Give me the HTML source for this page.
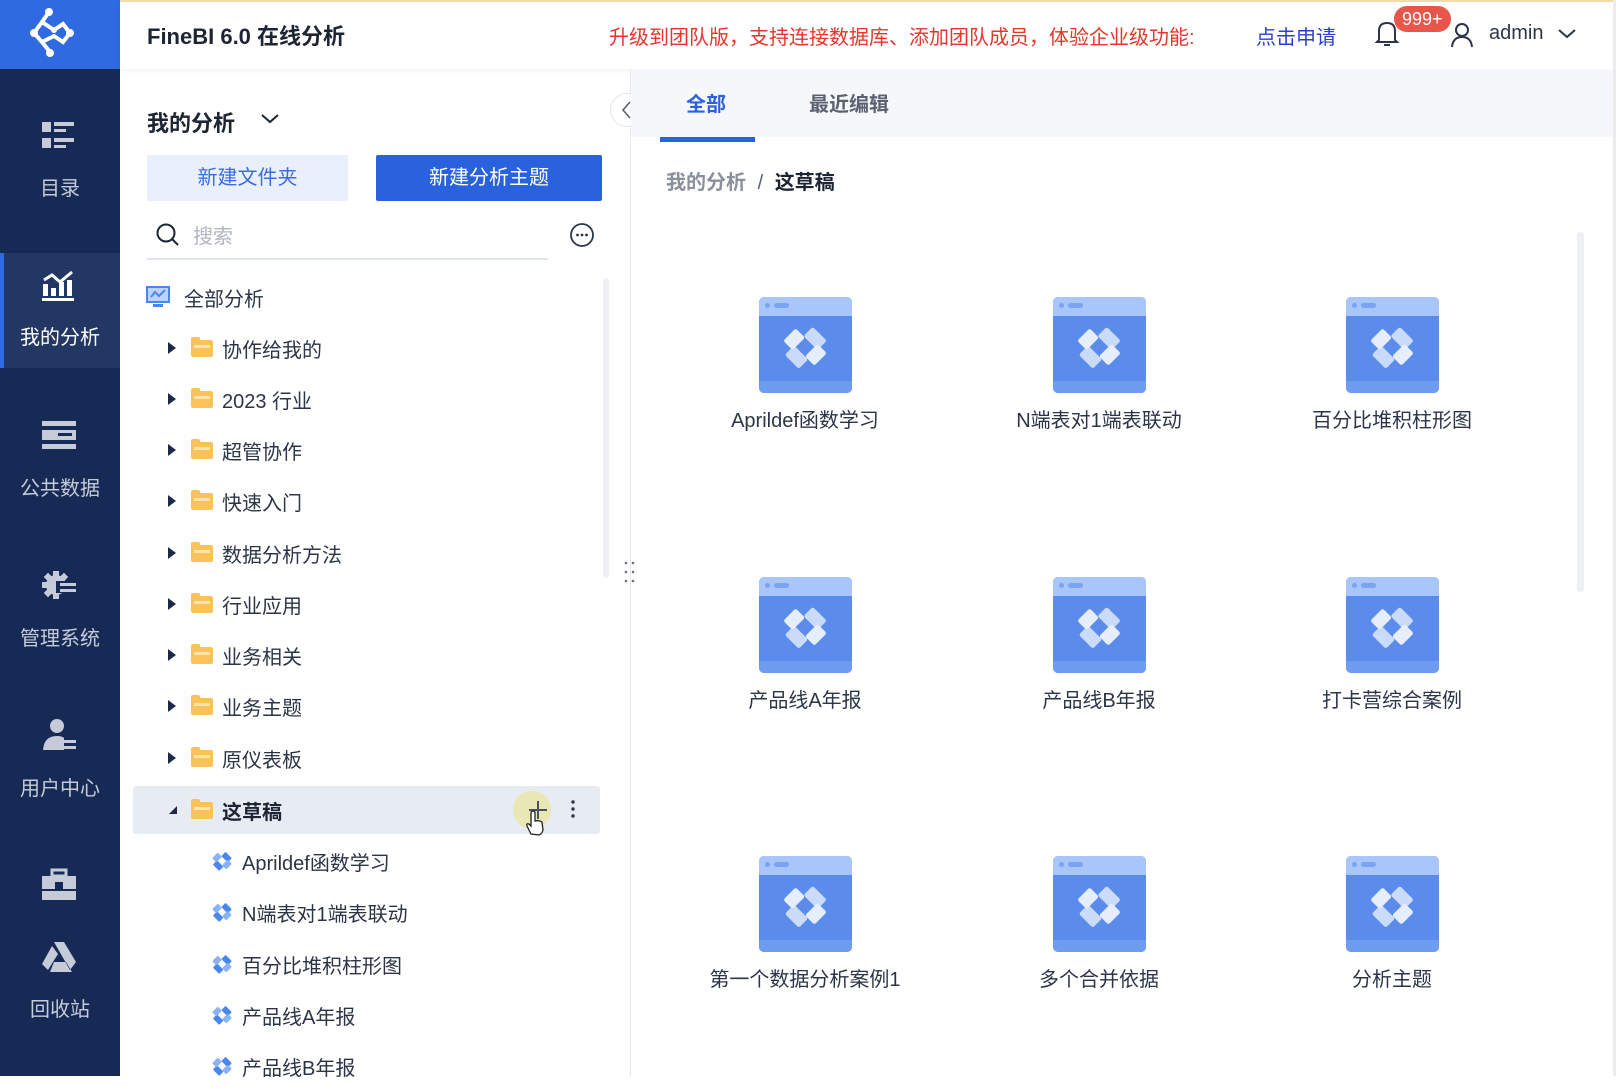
<!DOCTYPE html>
<html><head><meta charset="utf-8">
<style>
*{margin:0;padding:0;box-sizing:border-box}
body{width:1616px;height:1076px;overflow:hidden;background:#fff;font-family:"Liberation Sans","Noto Sans CJK SC",sans-serif;position:relative;color:#2c3548}
.abs{position:absolute}
.side{left:0;top:0;width:120px;height:1076px;background:#172a55}
.logo{left:0;top:0;width:120px;height:69px;background:#2f6ae0}
.nav{left:0;width:120px;text-align:center;color:#c5cbd8;font-size:20px}
.hdr{left:120px;top:0;width:1496px;height:69px;background:#fff;box-shadow:0 2px 6px rgba(0,0,0,.05);border-top:2px solid #f1dcaa}
.t{white-space:nowrap}
.row{left:133px;width:467px;height:48px;font-size:20px;display:flex;align-items:center}
.arrow{width:0;height:0;border-top:6px solid transparent;border-bottom:6px solid transparent;border-left:8px solid #1d2a45;position:absolute;left:35px}
.fold{position:absolute;left:58px;width:22px;height:17px;background:#fbc25c;border-radius:2px}
.fold:before{content:"";position:absolute;left:0;top:-3px;width:9px;height:4px;background:#fbc25c;border-radius:2px 2px 0 0}
.fold:after{content:"";position:absolute;left:3px;top:5px;width:16px;height:3px;background:#fde4ae}
.lbl{position:absolute;left:89px}
.dia{position:absolute;left:79px;width:20px;height:20px}
.card{width:93px;height:96px;border-radius:5px;background:#5b8cec;overflow:hidden}
.card .top{height:19px;background:#a9c6fa;position:relative}
.card .top:before{content:"";position:absolute;left:6px;top:6px;width:5px;height:5px;border-radius:50%;background:#7ba2f3}
.card .top:after{content:"";position:absolute;left:15px;top:6px;width:15px;height:5px;border-radius:3px;background:#7ba2f3}
.card .bot{position:absolute;bottom:0;left:0;right:0;height:12px;background:#6e9cf0}
.clabel{font-size:20px;color:#2c3548;text-align:center;width:280px}
</style></head><body>
<div class="abs side"></div>
<div class="abs logo"><svg width="120" height="69" viewBox="0 0 120 69"><g fill="none" stroke="#fff" stroke-width="4" stroke-linecap="round"><path d="M49 12 L42 22 L34 33 L42 42 L50 52 M42 22 L54 30 L63 24 L70 33 L63 42 L54 36 L42 42"/></g><g fill="#fff"><circle cx="49" cy="12" r="4"/><circle cx="34" cy="33" r="4"/><circle cx="50" cy="53" r="4"/><circle cx="70" cy="33" r="4"/><circle cx="54" cy="30" r="3"/></g></svg></div>
<div class="abs" style="left:0;top:253px;width:120px;height:115px;background:#223764"></div>
<div class="abs" style="left:0;top:253px;width:4px;height:115px;background:#2f6ae0"></div>
<svg class="abs" style="left:42px;top:120px" width="36" height="34"><g fill="#c5cbd8"><rect x="0" y="2" width="9" height="10"/><rect x="12" y="2" width="20" height="4"/><rect x="12" y="9" width="12" height="3"/><rect x="0" y="18" width="9" height="10"/><rect x="12" y="18" width="20" height="4"/><rect x="12" y="25" width="12" height="3"/></g></svg>
<div class="abs nav" style="top:172px">目录</div>
<svg class="abs" style="left:42px;top:270px" width="36" height="34"><g fill="#fff"><rect x="1" y="14" width="5" height="12"/><rect x="9" y="18" width="5" height="8"/><rect x="17" y="12" width="5" height="14"/><rect x="25" y="10" width="5" height="16"/><rect x="0" y="28" width="32" height="3"/></g><path d="M2 10 L10 5 L18 12 L30 2" stroke="#fff" stroke-width="3" fill="none"/></svg>
<div class="abs nav" style="top:321px;color:#fff">我的分析</div>
<svg class="abs" style="left:42px;top:419px" width="36" height="34"><g fill="#c5cbd8"><rect x="0" y="2" width="34" height="5"/><rect x="0" y="11" width="34" height="10"/><rect x="0" y="25" width="34" height="5"/></g><rect x="16" y="14" width="14" height="3" fill="#172a55"/></svg>
<div class="abs nav" style="top:472px">公共数据</div>
<svg class="abs" style="left:42px;top:569px" width="36" height="34"><g fill="#c5cbd8"><circle cx="14" cy="16" r="10"/><rect x="11" y="2" width="6" height="6"/><rect x="11" y="24" width="6" height="6"/><rect x="0" y="13" width="6" height="6"/><rect x="3" y="5" width="6" height="6" transform="rotate(45 6 8)"/><rect x="3" y="21" width="6" height="6" transform="rotate(45 6 24)"/><rect x="19" y="5" width="6" height="6" transform="rotate(45 22 8)"/></g><rect x="14" y="12" width="22" height="12" fill="#172a55"/><rect x="18" y="14" width="16" height="3" fill="#c5cbd8"/><rect x="18" y="20" width="16" height="3" fill="#c5cbd8"/></svg>
<div class="abs nav" style="top:622px">管理系统</div>
<svg class="abs" style="left:42px;top:718px" width="36" height="34"><circle cx="15" cy="8" r="7" fill="#c5cbd8"/><path d="M1 32 Q2 18 15 18 Q20 18 22 20 L22 32Z" fill="#c5cbd8"/><rect x="22" y="22" width="12" height="3" fill="#c5cbd8"/><rect x="22" y="28" width="12" height="3" fill="#c5cbd8"/></svg>
<div class="abs nav" style="top:772px">用户中心</div>
<svg class="abs" style="left:42px;top:868px" width="36" height="34"><rect x="10" y="2" width="14" height="6" fill="none" stroke="#c5cbd8" stroke-width="3"/><rect x="0" y="8" width="34" height="24" fill="#c5cbd8"/><rect x="13" y="14" width="8" height="9" fill="#172a55"/><rect x="0" y="21" width="34" height="2" fill="#172a55"/></svg>
<svg class="abs" style="left:42px;top:940px" width="36" height="34"><path d="M12 2 L22 2 L34 22 L28 30 Z M10 6 L0 24 L6 30 L16 14Z M8 32 L30 32 L24 22 L12 22Z" fill="#c5cbd8"/></svg>
<div class="abs nav" style="top:993px">回收站</div>

<div class="abs hdr"></div>
<div class="abs t" style="left:147px;top:19px;font-size:22px;font-weight:bold;color:#1d2433">FineBI 6.0 在线分析</div>
<div class="abs t" style="left:609px;top:21px;font-size:20px;color:#e8352b">升级到团队版，支持连接数据库、添加团队成员，体验企业级功能:</div>
<div class="abs t" style="left:1256px;top:21px;font-size:20px;color:#2a3fd0">点击申请</div>
<svg class="abs" style="left:1374px;top:20px" width="26" height="28"><path d="M5 20 L5 11 Q5 3 13 3 Q21 3 21 11 L21 20 L23 22 L3 22Z M10 25 L16 25" stroke="#2c3548" stroke-width="2" fill="none"/></svg>
<div class="abs t" style="left:1394px;top:6px;height:26px;padding:0 8px;border-radius:13px;background:#e8554a;color:#fff;font-size:18px;line-height:26px">999+</div>
<svg class="abs" style="left:1450px;top:22px" width="24" height="26"><circle cx="12" cy="8" r="6" stroke="#2c3548" stroke-width="2" fill="none"/><path d="M2 25 Q3 15 12 15 Q21 15 22 25" stroke="#2c3548" stroke-width="2" fill="none"/></svg>
<div class="abs t" style="left:1489px;top:22px;font-size:20px;color:#2c3548">admin</div>
<svg class="abs" style="left:1557px;top:28px" width="20" height="12"><path d="M2 2 L10 9 L18 2" stroke="#2c3548" stroke-width="2" fill="none"/></svg>

<div class="abs t" style="left:147px;top:106px;font-size:22px;font-weight:bold;color:#1d2433">我的分析</div>
<svg class="abs" style="left:260px;top:113px" width="20" height="12"><path d="M2 2 L10 9 L18 2" stroke="#1d2433" stroke-width="2" fill="none"/></svg>
<div class="abs" style="left:147px;top:155px;width:201px;height:46px;background:#e9effb;border-radius:2px;color:#3a6ee0;font-size:20px;text-align:center;line-height:46px">新建文件夹</div>
<div class="abs" style="left:376px;top:155px;width:226px;height:46px;background:#2a62dd;border-radius:2px;color:#fff;font-size:20px;text-align:center;line-height:46px">新建分析主题</div>
<svg class="abs" style="left:155px;top:222px" width="26" height="26"><circle cx="11" cy="11" r="8.5" stroke="#1d2433" stroke-width="2" fill="none"/><path d="M17 17 L23 23" stroke="#1d2433" stroke-width="2"/></svg>
<div class="abs t" style="left:193px;top:220px;font-size:20px;color:#b0b6c2">搜索</div>
<div class="abs" style="left:147px;top:258px;width:401px;height:2px;background:#dfe5ee"></div>
<svg class="abs" style="left:569px;top:222px" width="26" height="26"><circle cx="13" cy="13" r="11" stroke="#2c3548" stroke-width="1.8" fill="none"/><circle cx="8.5" cy="13" r="1.4" fill="#2c3548"/><circle cx="13" cy="13" r="1.4" fill="#2c3548"/><circle cx="17.5" cy="13" r="1.4" fill="#2c3548"/></svg>
<div class="abs" style="left:603px;top:278px;width:6px;height:300px;background:#eef0f4;border-radius:3px"></div>

<div class="abs row" style="top:273px"><svg class="abs" style="left:13px" width="24" height="22"><rect x="1" y="1" width="22" height="15" fill="#bcd3fb" stroke="#4a86ef" stroke-width="2"/><path d="M5 11 L9 6 L13 10 L19 4" stroke="#4a86ef" stroke-width="2" fill="none"/><rect x="7" y="18" width="10" height="3" fill="#4a86ef"/></svg><span class="lbl" style="left:51px">全部分析</span></div>
<div class="abs row" style="top:324px"><i class="arrow"></i><i class="fold"></i><span class="lbl">协作给我的</span></div>
<div class="abs row" style="top:375px"><i class="arrow"></i><i class="fold"></i><span class="lbl">2023 行业</span></div>
<div class="abs row" style="top:426px"><i class="arrow"></i><i class="fold"></i><span class="lbl">超管协作</span></div>
<div class="abs row" style="top:477px"><i class="arrow"></i><i class="fold"></i><span class="lbl">快速入门</span></div>
<div class="abs row" style="top:529px"><i class="arrow"></i><i class="fold"></i><span class="lbl">数据分析方法</span></div>
<div class="abs row" style="top:580px"><i class="arrow"></i><i class="fold"></i><span class="lbl">行业应用</span></div>
<div class="abs row" style="top:631px"><i class="arrow"></i><i class="fold"></i><span class="lbl">业务相关</span></div>
<div class="abs row" style="top:682px"><i class="arrow"></i><i class="fold"></i><span class="lbl">业务主题</span></div>
<div class="abs row" style="top:734px"><i class="arrow"></i><i class="fold"></i><span class="lbl">原仪表板</span></div>
<div class="abs row" style="top:786px;background:#e7ebf2;border-radius:3px"><i style="position:absolute;left:36px;width:0;height:0;border-left:8px solid transparent;border-bottom:8px solid #1d2a45"></i><i class="fold"></i><span class="lbl" style="font-weight:bold;color:#1d2433">这草稿</span>
<div style="position:absolute;left:380px;top:5px;width:38px;height:38px;border-radius:50%;background:#e9e7b4"></div>
<svg style="position:absolute;left:394px;top:13px" width="22" height="22"><path d="M11 2 V20 M2 11 H20" stroke="#4a5160" stroke-width="2"/></svg>
<svg style="position:absolute;left:437px;top:13px" width="6" height="20"><circle cx="3" cy="3" r="1.7" fill="#2c3548"/><circle cx="3" cy="10" r="1.7" fill="#2c3548"/><circle cx="3" cy="17" r="1.7" fill="#2c3548"/></svg>
</div>
<svg class="abs" style="left:525px;top:810px" width="20" height="26"><path d="M6 24 L2 16 Q1 13 4 14 L6 16 L6 3 Q6 1 8 1 Q10 1 10 3 L10 11 Q14 10 17 12 L18 20 Q17 24 14 25Z" fill="#fff" stroke="#222" stroke-width="1.3"/></svg>

<svg width="0" height="0" style="position:absolute"><defs><g id="dm"><rect x="6" y="1" width="9" height="6" rx="1" transform="rotate(45 10 10)" fill="#4a86ef"/><rect x="6" y="13" width="9" height="6" rx="1" transform="rotate(45 10 10)" fill="#4a86ef"/><rect x="1" y="7" width="6" height="8" rx="1" transform="rotate(45 10 10)" fill="#8bb2f6"/><rect x="13" y="5" width="6" height="8" rx="1" transform="rotate(45 10 10)" fill="#8bb2f6"/></g></defs></svg>
<div class="abs row" style="top:837px"><svg class="dia" viewBox="0 0 20 20"><use href="#dm"/></svg><span class="lbl" style="left:109px">Aprildef函数学习</span></div>
<div class="abs row" style="top:888px"><svg class="dia" viewBox="0 0 20 20"><use href="#dm"/></svg><span class="lbl" style="left:109px">N端表对1端表联动</span></div>
<div class="abs row" style="top:940px"><svg class="dia" viewBox="0 0 20 20"><use href="#dm"/></svg><span class="lbl" style="left:109px">百分比堆积柱形图</span></div>
<div class="abs row" style="top:991px"><svg class="dia" viewBox="0 0 20 20"><use href="#dm"/></svg><span class="lbl" style="left:109px">产品线A年报</span></div>
<div class="abs row" style="top:1042px"><svg class="dia" viewBox="0 0 20 20"><use href="#dm"/></svg><span class="lbl" style="left:109px">产品线B年报</span></div>

<div class="abs" style="left:630px;top:69px;width:1px;height:1007px;background:#e6e9ef"></div>
<div class="abs" style="left:610px;top:93px;width:34px;height:34px;border-radius:50%;background:#fff;border:1px solid #e3e6ec"></div>
<svg class="abs" style="left:620px;top:100px" width="14" height="20"><path d="M10 2 L3 10 L10 18" stroke="#5a6170" stroke-width="1.6" fill="none"/></svg>
<svg class="abs" style="left:623px;top:560px" width="14" height="26"><g fill="#6b7280"><circle cx="3" cy="3" r="1.3"/><circle cx="10" cy="3" r="1.3"/><circle cx="3" cy="12" r="1.3"/><circle cx="10" cy="12" r="1.3"/><circle cx="3" cy="21" r="1.3"/><circle cx="10" cy="21" r="1.3"/></g></svg>

<div class="abs" style="left:631px;top:69px;width:985px;height:68px;background:#f5f7fb"></div>
<div class="abs t" style="left:686px;top:88px;font-size:20px;font-weight:bold;color:#2a62dd">全部</div>
<div class="abs t" style="left:809px;top:88px;font-size:20px;font-weight:bold;color:#5a6170">最近编辑</div>
<div class="abs" style="left:660px;top:137px;width:95px;height:5px;background:#2a62dd"></div>
<div class="abs t" style="left:666px;top:166px;font-size:20px;font-weight:bold;color:#8a909c">我的分析 <span style="color:#5a6170;font-weight:normal;margin:0 6px">/</span> <span style="color:#1d2433">这草稿</span></div>
<div class="abs" style="left:1577px;top:232px;width:7px;height:360px;background:#eef0f4;border-radius:3px"></div>
<div class="abs" style="left:1613px;top:0;width:3px;height:1076px;background:#ececec"></div>

<div id="cards"></div>
<script>
var names=[["Aprildef函数学习","N端表对1端表联动","百分比堆积柱形图"],["产品线A年报","产品线B年报","打卡营综合案例"],["第一个数据分析案例1","多个合并依据","分析主题"]];
var cx=[805,1099,1392],iy=[297,577,856],ly=[404,684,963],h="";
for(var r=0;r<3;r++)for(var c=0;c<3;c++){
h+='<div class="abs card" style="left:'+(cx[c]-46)+'px;top:'+iy[r]+'px"><div class="top"></div><div class="bot"></div><svg style="position:absolute;left:24px;top:28px" width="44" height="44" viewBox="0 0 20 20"><g opacity=".85"><rect x="6" y="1" width="9" height="6" rx="1" transform="rotate(45 10 10)" fill="#dfe9fd"/><rect x="6" y="13" width="9" height="6" rx="1" transform="rotate(45 10 10)" fill="#dfe9fd"/><rect x="1" y="7" width="6" height="8" rx="1" transform="rotate(45 10 10)" fill="#fff"/><rect x="13" y="5" width="6" height="8" rx="1" transform="rotate(45 10 10)" fill="#fff"/></g></svg></div>';
h+='<div class="abs clabel t" style="left:'+(cx[c]-140)+'px;top:'+ly[r]+'px">'+names[r][c]+'</div>';}
document.getElementById('cards').innerHTML=h;
</script>
</body></html>
